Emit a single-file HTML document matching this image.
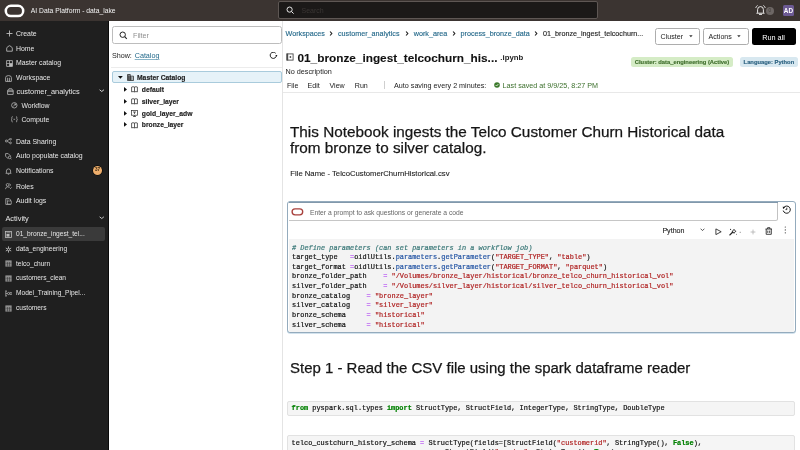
<!DOCTYPE html>
<html><head><meta charset="utf-8">
<style>
*{box-sizing:border-box;margin:0;padding:0}
html,body{width:800px;height:450px;overflow:hidden;background:#fff;}
body{will-change:transform;font-family:"Liberation Sans",sans-serif;color:#161513}
.a{position:absolute;white-space:nowrap}
#hdr{position:absolute;left:0;top:0;width:800px;height:21px;background:#3b3431}
#side{position:absolute;left:0;top:21px;width:109px;height:429px;background:#1f1f1f;border-right:1px solid #0a0a0a}
.si{position:absolute;left:16px;font-size:6.9px;color:#e6e6e6;line-height:8px;height:8px;white-space:nowrap}
.ic{position:absolute}
#cat{position:absolute;left:109px;top:21px;width:174px;height:429px;background:#fff;border-right:1px solid #e4e4e4}
#nb{position:absolute;left:283px;top:21px;width:517px;height:429px;background:#fff}
.mono{font-family:"Liberation Mono",monospace;font-size:6.91px;line-height:9.65px;white-space:pre;color:#111;-webkit-text-stroke:.2px currentColor}
.cm{color:#3a7878;font-style:italic}
.op{color:#a524f5}
.st{color:#b02323}
.pr{color:#2455a4}
.kw{color:#008000;font-weight:bold}
</style></head><body>
<!-- HEADER -->
<div id="hdr">
  <svg class="ic" style="left:3.5px;top:3.9px" width="22" height="14" viewBox="0 0 22 14"><rect x="1.8" y="1.8" width="17.4" height="10.2" rx="5.1" fill="none" stroke="#fff" stroke-width="2.5"/></svg>
  <div class="a" style="left:30.8px;top:6.2px;font-size:6.75px;line-height:9px;color:#f2f2f2">AI Data Platform - data_lake</div>
  <div class="a" style="left:278.2px;top:1.2px;width:319.5px;height:17.6px;background:#1b1918;border:1.1px solid #5e5754;border-radius:2px"></div>
  <svg class="ic" style="left:286.3px;top:6.4px" width="9" height="9" viewBox="0 0 9 9"><circle cx="3.6" cy="3.6" r="2.6" fill="none" stroke="#eee" stroke-width=".95"/><line x1="5.5" y1="5.5" x2="7.6" y2="7.6" stroke="#eee" stroke-width="1"/></svg>
  <div class="a" style="left:301.5px;top:6px;font-size:7px;line-height:9px;color:#3a3634">Search</div>
  <svg class="ic" style="left:754.5px;top:4.5px" width="11" height="10" viewBox="0 0 11 10"><path d="M2.6 7.4V4.6Q2.6 1.6 5.5 1.6Q8.4 1.6 8.4 4.6V7.4L9.3 8.2H1.7Z" fill="none" stroke="#fff" stroke-width=".9" stroke-linejoin="round"/><path d="M4.4 9.4H6.6" stroke="#fff" stroke-width=".9" stroke-linecap="round"/><path d="M0.8 2.6Q1.2 1.2 2.3 0.6M10.2 2.6Q9.8 1.2 8.7 0.6" fill="none" stroke="#fff" stroke-width=".8" stroke-linecap="round"/></svg>
  <div class="a" style="left:765.6px;top:6.8px;width:8.5px;height:8.5px;border-radius:50%;background:#6d6765;color:#3f3a38;font-size:4.5px;line-height:8.5px;text-align:center">0</div>
  <div class="a" style="left:782.9px;top:4.9px;width:11.1px;height:11.2px;border-radius:1.5px;background:#6c5a94;color:#fff;font-size:6.4px;font-weight:bold;line-height:11px;text-align:center">AD</div>
</div>
<!-- SIDEBAR -->
<div id="side">
  <svg class="ic" style="left:5.5px;top:9.1px" width="7" height="7" viewBox="0 0 7 7"><path d="M3.5 0.5V6.5M0.5 3.5H6.5" stroke="#bdbdbd" stroke-width=".9"/></svg>
  <div class="si" style="left:16px;top:8.6px">Create</div>
  <svg class="ic" style="left:5.5px;top:24.0px" width="7" height="7" viewBox="0 0 7 7"><path d="M0.7 6.2V3.1Q0.7 2.6 1.1 2.3L3 0.9Q3.5 0.5 4 0.9L5.9 2.3Q6.3 2.6 6.3 3.1V6.2Z" fill="none" stroke="#bdbdbd" stroke-width=".85" stroke-linejoin="round"/></svg>
  <div class="si" style="left:16px;top:23.5px">Home</div>
  <svg class="ic" style="left:5.5px;top:38.7px" width="7" height="7" viewBox="0 0 7 7"><path d="M0.6 0.6H6.4V6.4H0.6Z" fill="none" stroke="#bdbdbd" stroke-width=".8"/><path d="M3.5 0.6V6.4M0.6 3.5H6.4" stroke="#bdbdbd" stroke-width=".7"/><rect x="3.5" y="3.5" width="2.9" height="2.9" fill="#bdbdbd"/></svg>
  <div class="si" style="left:16px;top:38.2px">Master catalog</div>
  <svg class="ic" style="left:5.2px;top:53.5px" width="7" height="7" viewBox="0 0 7 7"><path d="M0.6 6.4V2.6A2.9 2 0 0 1 6.4 2.6V6.4ZM2.6 2.8V6.4M4.4 2.8V6.4" fill="none" stroke="#bdbdbd" stroke-width=".8"/></svg>
  <div class="si" style="left:16px;top:53.0px">Workspace</div>
  <svg class="ic" style="left:7px;top:67.2px" width="7" height="7" viewBox="0 0 7 7"><path d="M0.6 2.2H6.2V6.4H0.6Z" fill="none" stroke="#bdbdbd" stroke-width=".8"/><path d="M1.4 2.2L2 0.7H4.8L5.4 2.2" fill="none" stroke="#bdbdbd" stroke-width=".7"/><path d="M0.6 3.6H6.2" stroke="#bdbdbd" stroke-width=".7"/></svg>
  <div class="si" style="left:16.5px;top:66.9px;font-size:7.4px">customer_analytics</div>
  <svg class="ic" style="left:10.8px;top:81.3px" width="7" height="7" viewBox="0 0 7 7"><circle cx="3.3" cy="3.3" r="2.7" fill="none" stroke="#bdbdbd" stroke-width=".75"/><path d="M2 4.6L4.6 2M3.2 2H4.6V3.4" fill="none" stroke="#bdbdbd" stroke-width=".7"/></svg>
  <div class="si" style="left:21.4px;top:80.8px">Workflow</div>
  <svg class="ic" style="left:10.8px;top:95.3px" width="7" height="7" viewBox="0 0 7 7"><path d="M1.6 0.6Q0.8 0.6 0.8 1.5V2.6L0.3 3.3L0.8 4V5.1Q0.8 6 1.6 6M5 0.6Q5.8 0.6 5.8 1.5V2.6L6.3 3.3L5.8 4V5.1Q5.8 6 5 6M2.5 3.3H4.1" fill="none" stroke="#bdbdbd" stroke-width=".75"/></svg>
  <div class="si" style="left:21.4px;top:94.8px">Compute</div>
  <svg class="ic" style="left:5.3px;top:117.0px" width="7" height="7" viewBox="0 0 7 7"><circle cx="1.3" cy="3" r="1" fill="none" stroke="#bdbdbd" stroke-width=".7"/><circle cx="5.5" cy="1.1" r="0.9" fill="none" stroke="#bdbdbd" stroke-width=".7"/><circle cx="5.5" cy="4.9" r="0.9" fill="none" stroke="#bdbdbd" stroke-width=".7"/><path d="M2.2 2.5L4.6 1.4M2.2 3.5L4.6 4.6" stroke="#bdbdbd" stroke-width=".7"/></svg>
  <div class="si" style="left:16px;top:116.5px">Data Sharing</div>
  <svg class="ic" style="left:5.3px;top:131.6px" width="7" height="7" viewBox="0 0 7 7"><path d="M0.6 0.6H3.2L5.4 2.8L2.8 5.4L0.6 3.2Z" fill="none" stroke="#bdbdbd" stroke-width=".75"/><circle cx="4.6" cy="4.4" r="1.3" fill="#1f1f1f" stroke="#bdbdbd" stroke-width=".7"/><path d="M5.6 5.4L6.6 6.4" stroke="#bdbdbd" stroke-width=".7"/></svg>
  <div class="si" style="left:16px;top:131.1px">Auto populate catalog</div>
  <svg class="ic" style="left:5.3px;top:146.6px" width="7" height="7" viewBox="0 0 7 7"><path d="M1.4 4.8V3A2.1 2.1 0 0 1 5.6 3V4.8L6.2 5.3H0.8Z" fill="none" stroke="#bdbdbd" stroke-width=".75"/><path d="M2.8 6.3H4.2" stroke="#bdbdbd" stroke-width=".7"/></svg>
  <div class="si" style="left:16px;top:146.1px">Notifications</div>
  <svg class="ic" style="left:5.3px;top:162.0px" width="7" height="7" viewBox="0 0 7 7"><circle cx="2.6" cy="1.9" r="1.4" fill="none" stroke="#bdbdbd" stroke-width=".7"/><path d="M0.4 6.2Q0.8 3.8 2.6 3.8Q4 3.8 4.6 5M4.4 0.6A1.4 1.4 0 0 1 4.6 3.2M5 6L6.6 4.4" fill="none" stroke="#bdbdbd" stroke-width=".7"/></svg>
  <div class="si" style="left:16px;top:161.5px">Roles</div>
  <svg class="ic" style="left:5.3px;top:176.6px" width="7" height="7" viewBox="0 0 7 7"><path d="M0.8 0.6H4.2L5.6 2V6.4H0.8Z" fill="none" stroke="#bdbdbd" stroke-width=".75"/><rect x="2.6" y="3" width="3.6" height="3" fill="#1f1f1f" stroke="#bdbdbd" stroke-width=".6"/><path d="M1.8 2H3.4" stroke="#bdbdbd" stroke-width=".6"/></svg>
  <div class="si" style="left:16px;top:176.1px">Audit logs</div>
  <svg class="ic" style="left:98.6px;top:68.2px" width="5.5" height="3.5" viewBox="0 0 5.5 3.5"><path d="M0.6 0.8L2.75 2.5L4.9 0.8" fill="none" stroke="#e0e0e0" stroke-width=".95"/></svg>
  <div class="a" style="left:93px;top:145.2px;width:9.1px;height:8.8px;border-radius:50%;background:#eeae6c;box-shadow:0 0 0 .5px #000;color:#3b2a12;font-size:4.6px;font-weight:bold;line-height:8.8px;text-align:center">37</div>
  <div class="a" style="left:5.4px;top:192.6px;font-size:7.4px;line-height:10px;color:#e6e6e6">Activity</div>
  <svg class="ic" style="left:98.5px;top:195.0px" width="5.5" height="3.5" viewBox="0 0 5.5 3.5"><path d="M0.6 0.8L2.75 2.5L4.9 0.8" fill="none" stroke="#d0d0d0" stroke-width=".95"/></svg>
  <div class="a" style="left:2px;top:206.0px;width:103px;height:13.5px;border-radius:2px;background:#3a3a3a"></div>
  <svg class="ic" style="left:5.3px;top:209.6px" width="7" height="7" viewBox="0 0 7 7"><rect x="0.5" y="0.5" width="6" height="6" fill="none" stroke="#bdbdbd" stroke-width=".8"/><rect x="1.5" y="3" width="3" height="2.6" fill="#bdbdbd"/><path d="M1.5 1.8H5.5" stroke="#bdbdbd" stroke-width=".6"/></svg>
  <div class="si" style="left:16px;top:209.1px;transform:scaleX(.96);transform-origin:0 0">01_bronze_ingest_tel...</div>
  <svg class="ic" style="left:5.3px;top:224.5px" width="7" height="7" viewBox="0 0 7 7"><path d="M3.5 0.4V6.6M0.8 2L6.2 5M0.8 5L6.2 2" fill="none" stroke="#bdbdbd" stroke-width=".9"/><circle cx="3.5" cy="3.5" r="1" fill="#1f1f1f" stroke="#bdbdbd" stroke-width=".6"/></svg>
  <div class="si" style="left:16px;top:224.0px;transform:scaleX(.96);transform-origin:0 0">data_engineering</div>
  <svg class="ic" style="left:5.3px;top:239.2px" width="7" height="7" viewBox="0 0 7 7"><rect x="0.4" y="0.5" width="6.2" height="6" fill="#a9a9a9"/><path d="M0.4 2.1H6.6M0.4 3.6H6.6M0.4 5.1H6.6M2.5 2.1V6.5M4.5 2.1V6.5" stroke="#1f1f1f" stroke-width=".45"/></svg>
  <div class="si" style="left:16px;top:238.7px;transform:scaleX(.96);transform-origin:0 0">telco_churn</div>
  <svg class="ic" style="left:5.3px;top:253.9px" width="7" height="7" viewBox="0 0 7 7"><rect x="0.4" y="0.5" width="6.2" height="6" fill="#a9a9a9"/><path d="M0.4 2.1H6.6M0.4 3.6H6.6M0.4 5.1H6.6M2.5 2.1V6.5M4.5 2.1V6.5" stroke="#1f1f1f" stroke-width=".45"/></svg>
  <div class="si" style="left:16px;top:253.4px;transform:scaleX(.96);transform-origin:0 0">customers_clean</div>
  <svg class="ic" style="left:5.3px;top:268.5px" width="7" height="7" viewBox="0 0 7 7"><path d="M0.8 0.4V6.6M0.8 1.2H2M0.8 5.8H2M0.8 3.5H2.4" stroke="#bdbdbd" stroke-width=".7"/><circle cx="3.6" cy="3.5" r="1.1" fill="none" stroke="#bdbdbd" stroke-width=".7"/><circle cx="5.9" cy="3.5" r="1.1" fill="none" stroke="#bdbdbd" stroke-width=".7"/></svg>
  <div class="si" style="left:16px;top:268.0px;transform:scaleX(.96);transform-origin:0 0">Model_Training_Pipel...</div>
  <svg class="ic" style="left:5.3px;top:283.7px" width="7" height="7" viewBox="0 0 7 7"><rect x="0.4" y="0.5" width="6.2" height="6" fill="#a9a9a9"/><path d="M0.4 2.1H6.6M0.4 3.6H6.6M0.4 5.1H6.6M2.5 2.1V6.5M4.5 2.1V6.5" stroke="#1f1f1f" stroke-width=".45"/></svg>
  <div class="si" style="left:16px;top:283.2px;transform:scaleX(.96);transform-origin:0 0">customers</div>
</div>
<!-- CATALOG -->
<div id="cat"></div>
<div class="a" style="left:112.2px;top:26.3px;width:169.5px;height:17.3px;border:1.1px solid #bdbdbd;border-radius:2.5px;background:#fff"></div>
<svg class="ic" style="left:118.5px;top:30.5px" width="9" height="9" viewBox="0 0 9 9"><circle cx="3.7" cy="3.7" r="2.7" fill="none" stroke="#222" stroke-width="1"/><line x1="5.7" y1="5.7" x2="7.8" y2="7.8" stroke="#222" stroke-width="1.1"/></svg>
<div class="a" style="left:133px;top:30.5px;font-size:7.2px;line-height:9px;color:#8f8f8f">Filter</div>
<div class="a" style="left:111.9px;top:50.9px;font-size:7.2px;line-height:9px;color:#262626">Show:</div>
<div class="a" style="left:134.7px;top:50.9px;font-size:7.2px;line-height:9px;color:#246a8b;text-decoration:underline;text-decoration-color:#8ab5c8;text-decoration-thickness:.7px;text-underline-offset:.9px">Catalog</div>
<svg class="ic" style="left:268.5px;top:52px" width="10" height="8" viewBox="0 0 10 8"><path d="M6.67 1.31A3.1 3.1 0 1 0 7.39 3.57" fill="none" stroke="#151515" stroke-width=".95"/><path d="M6.3 3.1H8.5L7.4 4.6Z" fill="#151515"/></svg>
<div class="a" style="left:111px;top:67px;width:171px;height:1px;background:#ececec"></div>
<div class="a" style="left:111.9px;top:71.3px;width:169.8px;height:11.4px;border:1px solid #a9cbdc;border-radius:2px;background:#e6f2f8"></div>
<svg class="ic" style="left:118.4px;top:76.2px" width="5" height="3" viewBox="0 0 5 3"><path d="M0 0.1H4.8L2.4 2.7Z" fill="#111"/></svg>
<svg class="ic" style="left:126.5px;top:73.8px" width="7" height="7" viewBox="0 0 7 7"><path d="M0.5 0.5H3.3V6.5H0.5ZM3.3 2.2H6.5V6.5H3.3Z" fill="none" stroke="#2a2a2a" stroke-width=".8"/><path d="M1.2 1.2H2.6V6H1.2Z" fill="#2a2a2a"/><path d="M4.9 3V6" stroke="#2a2a2a" stroke-width=".8"/></svg>
<div class="a" style="left:137px;top:72.5px;font-size:6.75px;line-height:9px;font-weight:bold;color:#1c1c1c;-webkit-text-stroke:.15px #1c1c1c">Master Catalog</div>
<svg class="ic" style="left:124.1px;top:86.5px" width="3.2" height="5" viewBox="0 0 3.2 5"><path d="M0 0V4.8L3 2.4Z" fill="#111"/></svg>
<svg class="ic" style="left:131.3px;top:85.8px" width="7" height="7" viewBox="0 0 7 7"><path d="M0.6 1.1Q2 0.3 3.5 1.1Q5 0.3 6.4 1.1V5.9Q5 5.2 3.5 5.9Q2 5.2 0.6 5.9Z M3.5 1.1V5.9" fill="none" stroke="#2a2a2a" stroke-width=".75" stroke-linejoin="round"/></svg>
<div class="a" style="left:141.8px;top:84.5px;font-size:6.75px;line-height:9px;font-weight:bold;color:#1c1c1c;-webkit-text-stroke:.15px #1c1c1c">default</div>
<svg class="ic" style="left:124.1px;top:98.7px" width="3.2" height="5" viewBox="0 0 3.2 5"><path d="M0 0V4.8L3 2.4Z" fill="#111"/></svg>
<svg class="ic" style="left:131.3px;top:98.0px" width="7" height="7" viewBox="0 0 7 7"><path d="M0.6 1.1Q2 0.3 3.5 1.1Q5 0.3 6.4 1.1V5.9Q5 5.2 3.5 5.9Q2 5.2 0.6 5.9Z M3.5 1.1V5.9" fill="none" stroke="#2a2a2a" stroke-width=".75" stroke-linejoin="round"/></svg>
<div class="a" style="left:141.8px;top:96.7px;font-size:6.75px;line-height:9px;font-weight:bold;color:#1c1c1c;-webkit-text-stroke:.15px #1c1c1c">silver_layer</div>
<svg class="ic" style="left:124.1px;top:110.5px" width="3.2" height="5" viewBox="0 0 3.2 5"><path d="M0 0V4.8L3 2.4Z" fill="#111"/></svg>
<svg class="ic" style="left:131.3px;top:109.8px" width="7" height="7" viewBox="0 0 7 7"><rect x="0.5" y="0.6" width="6" height="4.6" fill="none" stroke="#2a2a2a" stroke-width=".7"/><path d="M3.5 5.2V6.5M2 6.5H5M2 2H5M3.5 2V4" stroke="#2a2a2a" stroke-width=".7"/></svg>
<div class="a" style="left:141.8px;top:108.5px;font-size:6.75px;line-height:9px;font-weight:bold;color:#1c1c1c;-webkit-text-stroke:.15px #1c1c1c">gold_layer_adw</div>
<svg class="ic" style="left:124.1px;top:122.2px" width="3.2" height="5" viewBox="0 0 3.2 5"><path d="M0 0V4.8L3 2.4Z" fill="#111"/></svg>
<svg class="ic" style="left:131.3px;top:121.5px" width="7" height="7" viewBox="0 0 7 7"><path d="M0.6 1.1Q2 0.3 3.5 1.1Q5 0.3 6.4 1.1V5.9Q5 5.2 3.5 5.9Q2 5.2 0.6 5.9Z M3.5 1.1V5.9" fill="none" stroke="#2a2a2a" stroke-width=".75" stroke-linejoin="round"/></svg>
<div class="a" style="left:141.8px;top:120.2px;font-size:6.75px;line-height:9px;font-weight:bold;color:#1c1c1c;-webkit-text-stroke:.15px #1c1c1c">bronze_layer</div>
<!-- NOTEBOOK -->
<div id="nb"></div>
<div class="a" style="left:285.5px;top:29.0px;font-size:7.2px;line-height:9px;color:#226789;-webkit-text-stroke:.12px #226789">Workspaces</div>
<svg class="ic" style="left:329.05px;top:31.3px" width="4" height="5" viewBox="0 0 4 5"><path d="M1.1 0.5L2.8 2.5L1.1 4.5" fill="none" stroke="#1e1e1e" stroke-width="1.15"/></svg>
<div class="a" style="left:338px;top:29.0px;font-size:7.2px;line-height:9px;color:#226789;-webkit-text-stroke:.12px #226789">customer_analytics</div>
<svg class="ic" style="left:405.05px;top:31.3px" width="4" height="5" viewBox="0 0 4 5"><path d="M1.1 0.5L2.8 2.5L1.1 4.5" fill="none" stroke="#1e1e1e" stroke-width="1.15"/></svg>
<div class="a" style="left:413.75px;top:29.0px;font-size:7.2px;line-height:9px;color:#226789;-webkit-text-stroke:.12px #226789">work_area</div>
<svg class="ic" style="left:451.65px;top:31.3px" width="4" height="5" viewBox="0 0 4 5"><path d="M1.1 0.5L2.8 2.5L1.1 4.5" fill="none" stroke="#1e1e1e" stroke-width="1.15"/></svg>
<div class="a" style="left:460.5px;top:29.0px;font-size:7.2px;line-height:9px;color:#226789;-webkit-text-stroke:.12px #226789">process_bronze_data</div>
<svg class="ic" style="left:534.45px;top:31.3px" width="4" height="5" viewBox="0 0 4 5"><path d="M1.1 0.5L2.8 2.5L1.1 4.5" fill="none" stroke="#1e1e1e" stroke-width="1.15"/></svg>
<div class="a" style="left:543px;top:29.0px;font-size:7.2px;line-height:9px;color:#1a1a1a;-webkit-text-stroke:.12px #1a1a1a">01_bronze_ingest_telcochurn...</div>
<div class="a" style="left:655.2px;top:28.3px;width:44.7px;height:16.5px;border:1.1px solid #adadad;border-radius:2.5px"></div>
<div class="a" style="left:660.6px;top:32.5px;font-size:7.1px;line-height:9px;color:#222">Cluster</div>
<svg class="ic" style="left:688.8px;top:35.3px" width="4" height="3" viewBox="0 0 4 3"><path d="M0.2 0.3H3.6L1.9 2.3Z" fill="#333"/></svg>
<div class="a" style="left:703.4px;top:28.3px;width:45.2px;height:16.5px;border:1.1px solid #adadad;border-radius:2.5px"></div>
<div class="a" style="left:708.6px;top:32.5px;font-size:7.1px;line-height:9px;color:#222">Actions</div>
<svg class="ic" style="left:737.4px;top:35.3px" width="4" height="3" viewBox="0 0 4 3"><path d="M0.2 0.3H3.6L1.9 2.3Z" fill="#333"/></svg>
<div class="a" style="left:752.4px;top:28.4px;width:43.2px;height:16.6px;background:#000;border-radius:2.5px"></div>
<div class="a" style="left:762.2px;top:32.8px;font-size:7.3px;line-height:9px;color:#fff">Run all</div>
<svg class="ic" style="left:285.5px;top:52.5px" width="8" height="8" viewBox="0 0 8 8"><rect x="0.9" y="0.9" width="6.2" height="6.2" fill="none" stroke="#4a4a4a" stroke-width=".9"/><rect x="0.6" y="0.6" width="1.6" height="6.8" fill="#4a4a4a"/><circle cx="4.4" cy="4" r=".9" fill="#4a4a4a"/></svg>
<div class="a" style="left:297.5px;top:50.6px;font-size:11.8px;line-height:14px;font-weight:bold;color:#111;-webkit-text-stroke:.1px #111">01_bronze_ingest_telcochurn_his...</div>
<div class="a" style="left:500.3px;top:53.2px;font-size:7.8px;line-height:9px;font-weight:bold;color:#222">.ipynb</div>
<div class="a" style="left:630.8px;top:56.8px;width:102.4px;height:10.1px;border-radius:2.5px;background:#d5ecc6;color:#3f6e2c;font-size:5.8px;font-weight:bold;line-height:10.1px;text-align:center;-webkit-text-stroke:.15px #3c6b2a">Cluster: data_engineering (Active)</div>
<div class="a" style="left:740px;top:56.8px;width:57.8px;height:10.1px;border-radius:2.5px;background:#d8e8f0;color:#2c6281;font-size:5.8px;font-weight:bold;line-height:10.1px;text-align:center;-webkit-text-stroke:.15px #2c6281">Language: Python</div>
<div class="a" style="left:285.5px;top:67.3px;font-size:7.25px;line-height:9px;color:#222">No description</div>
<div class="a" style="left:286.9px;top:81.9px;font-size:7.1px;line-height:9px;color:#222">File</div>
<div class="a" style="left:307.5px;top:81.9px;font-size:7.1px;line-height:9px;color:#222">Edit</div>
<div class="a" style="left:329.5px;top:81.9px;font-size:7.1px;line-height:9px;color:#222">View</div>
<div class="a" style="left:354.8px;top:81.9px;font-size:7.1px;line-height:9px;color:#222">Run</div>
<div class="a" style="left:384.3px;top:81px;width:.8px;height:7.8px;background:#cfcfcf"></div>
<div class="a" style="left:394px;top:80.6px;font-size:7.2px;line-height:9px;color:#222">Auto saving every 2 minutes:</div>
<svg class="ic" style="left:493.6px;top:82.2px" width="6" height="6" viewBox="0 0 6 6"><circle cx="3" cy="3" r="2.8" fill="#3d7a2c"/><path d="M1.7 3.1L2.6 4L4.3 2.1" fill="none" stroke="#fff" stroke-width=".8"/></svg>
<div class="a" style="left:502.6px;top:80.6px;font-size:7.2px;line-height:9px;color:#3b6f2b">Last saved at 9/9/25, 8:27 PM</div>
<div class="a" style="left:283px;top:91.8px;width:517px;height:1px;background:#e8e8e8"></div>
<div class="a" style="left:290.3px;top:124.4px;font-size:15.5px;-webkit-text-stroke:.25px #161616;line-height:15.3px;color:#161616;transform:scaleX(0.987);transform-origin:0 0">This Notebook ingests the Telco Customer Churn Historical data<br>from bronze to silver catalog.</div>
<div class="a" style="left:290.3px;top:168.8px;font-size:7.7px;line-height:9px;color:#1a1a1a;-webkit-text-stroke:.1px #1a1a1a">File Name - TelcoCustomerChurnHistorical.csv</div>
<div class="a" style="left:287.3px;top:201.4px;width:508.4px;height:131.6px;border:1.4px solid #94abbd;border-radius:3px;background:#fff;box-shadow:0 .8px 0 #c4d9e8"></div>
<div class="a" style="left:288.5px;top:201.5px;width:489.2px;height:1.9px;background:#8198ab"></div>
<div class="a" style="left:288.7px;top:239.3px;width:505.6px;height:92.3px;background:#f3f3f3;border-radius:0 0 2px 2px"></div>
<div class="a" style="left:288.7px;top:202.8px;width:489px;height:18.1px;border-right:1.2px solid #c2c2c2;border-bottom:1.4px solid #c6c6c6;border-radius:0 0 2.5px 0;background:#fff"></div>
<svg class="ic" style="left:290.6px;top:207.6px" width="13" height="8" viewBox="0 0 13 8"><rect x="1.1" y="0.9" width="10.6" height="5.9" rx="2.95" fill="none" stroke="#a8403c" stroke-width="1.35"/></svg>
<div class="a" style="left:310px;top:207.8px;font-size:6.74px;line-height:9px;color:#666">Enter a prompt to ask questions or generate a code</div>
<svg class="ic" style="left:781.5px;top:205px" width="9.5" height="9.5" viewBox="0 0 9.5 9.5"><path d="M1.75 2.59A3.6 3.6 0 1 1 1.22 5.58" fill="none" stroke="#111" stroke-width=".95"/><path d="M0.8 1.6L3.2 2.5L1 3.9Z" fill="#111"/><path d="M4.8 2.7V4.6H3.5" fill="none" stroke="#111" stroke-width=".85"/></svg>
<div class="a" style="left:662.4px;top:227px;font-size:7.1px;line-height:9px;color:#1a1a1a;-webkit-text-stroke:.1px #1a1a1a">Python</div>
<svg class="ic" style="left:699.6px;top:228.2px" width="5" height="3.5" viewBox="0 0 5 3.5"><path d="M0.6 0.7L2.5 2.6L4.4 0.7" fill="none" stroke="#444" stroke-width=".9"/></svg>
<svg class="ic" style="left:714.6px;top:227.8px" width="7" height="7.5" viewBox="0 0 7 7.5"><path d="M0.9 0.9V6.6L6.2 3.75Z" fill="none" stroke="#222" stroke-width=".85" stroke-linejoin="miter"/></svg>
<svg class="ic" style="left:729px;top:227.8px" width="13" height="8" viewBox="0 0 13 8"><path d="M0.9 6.9L3.6 4.2" stroke="#222" stroke-width="1.3" stroke-linecap="round"/><path d="M5 1.2L5.7 2.6L7.1 3.3L5.7 4L5 5.4L4.3 4L2.9 3.3L4.3 2.6Z" fill="none" stroke="#222" stroke-width=".75"/><circle cx="1.6" cy="1.4" r=".55" fill="#222"/><circle cx="7.6" cy="6.2" r=".45" fill="#222"/><path d="M10.6 4.3H12" stroke="#666" stroke-width=".6"/></svg>
<svg class="ic" style="left:749.8px;top:228.6px" width="6" height="6" viewBox="0 0 6 6"><path d="M3 0.6V5.4M0.6 3H5.4" stroke="#b0b0b0" stroke-width=".8"/></svg>
<svg class="ic" style="left:764.8px;top:227.4px" width="7.5" height="8" viewBox="0 0 7.5 8"><path d="M0.5 2H7M2.6 2V0.7H4.9V2M1.2 2V7.3H6.3V2M2.8 3.6V5.9M4.7 3.6V5.9" fill="none" stroke="#222" stroke-width=".85"/></svg>
<svg class="ic" style="left:783.6px;top:225.8px" width="3" height="8" viewBox="0 0 3 8"><circle cx="1.3" cy="1" r=".6" fill="#333"/><circle cx="1.3" cy="3.9" r=".6" fill="#333"/><circle cx="1.3" cy="6.8" r=".6" fill="#333"/></svg>
<div class="a mono" style="left:292px;top:243.5px"><span class="cm"># Define parameters (can set parameters in a workflow job)</span>
target_type   <span class="op">=</span>oidlUtils.<span class="pr">parameters</span>.<span class="pr">getParameter</span>(<span class="st">"TARGET_TYPE"</span>, <span class="st">"table"</span>)
target_format <span class="op">=</span>oidlUtils.<span class="pr">parameters</span>.<span class="pr">getParameter</span>(<span class="st">"TARGET_FORMAT"</span>, <span class="st">"parquet"</span>)
bronze_folder_path    <span class="op">=</span> <span class="st">"/Volumes/bronze_layer/historical/bronze_telco_churn_historical_vol"</span>
silver_folder_path    <span class="op">=</span> <span class="st">"/Volumes/silver_layer/historical/silver_telco_churn_historical_vol"</span>
bronze_catalog    <span class="op">=</span> <span class="st">"bronze_layer"</span>
silver_catalog    <span class="op">=</span> <span class="st">"silver_layer"</span>
bronze_schema     <span class="op">=</span> <span class="st">"historical"</span>
silver_schema     <span class="op">=</span> <span class="st">"historical"</span></div>
<div class="a" style="left:290.3px;top:360.1px;font-size:15.5px;-webkit-text-stroke:.25px #161616;line-height:16px;color:#161616;transform:scaleX(0.966);transform-origin:0 0">Step 1 - Read the CSV file using the spark dataframe reader</div>
<div class="a" style="left:287.1px;top:401.1px;width:508.4px;height:14.7px;border:1px solid #e2e2e2;border-radius:2px;background:#f5f5f5"></div>
<div class="a mono" style="left:291.6px;top:404.3px"><span class="kw">from</span> pyspark.sql.types <span class="kw">import</span> StructType, StructField, IntegerType, StringType, DoubleType</div>
<div class="a" style="left:287.1px;top:435px;width:508.4px;height:30px;border:1px solid #e2e2e2;border-radius:2px;background:#f5f5f5"></div>
<div class="a mono" style="left:291.6px;top:438.5px">telco_custchurn_history_schema <span class="op">=</span> StructType(fields=[StructField(<span class="st">"customerid"</span>, StringType(), <span class="kw">False</span>),
                                     StructField(<span class="st">"gender"</span>, StringType(), <span class="kw">True</span>),</div>
</body></html>
